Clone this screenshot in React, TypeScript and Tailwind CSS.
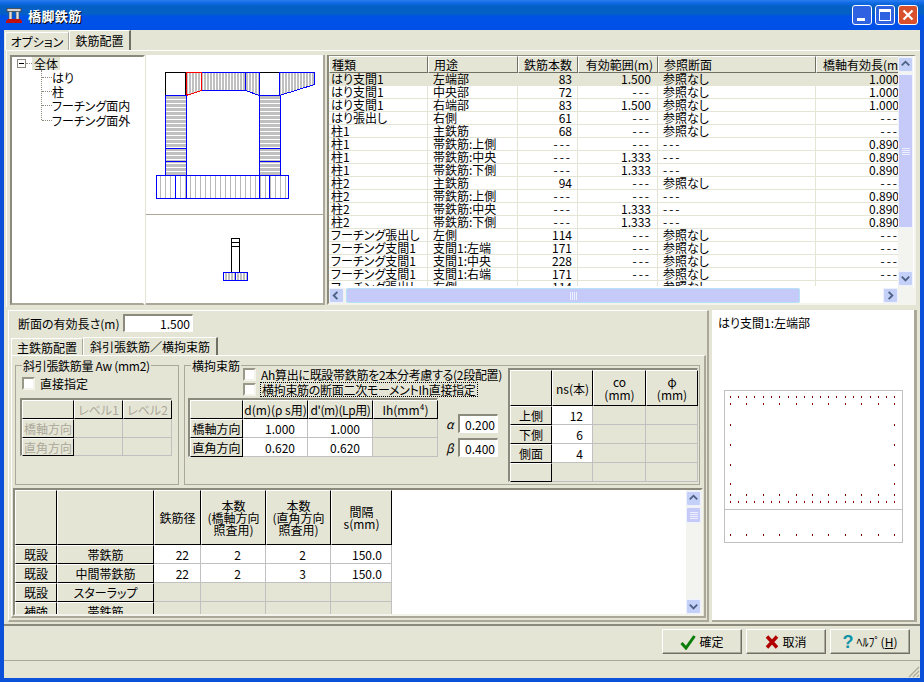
import React from "react";

const DARK = "border-[#aca899]";
const HEAD = "bg-[#e5e5d6] border-t border-l border-t-white border-l-white border-r border-b border-r-black border-b-black flex items-center justify-center text-center";
const DATA = "bg-white border-r border-b border-[#c0c0c0] flex items-center justify-end";
const GRAY = "bg-[#e5e5d6] border-r border-b border-[#c0c0c0]";
const SUNK = "border-t-2 border-l-2 border-t-[#8c8a7c] border-l-[#8c8a7c] border-r border-b border-r-white border-b-white";

function H({ children, off }: { children?: React.ReactNode; off?: boolean }) {
  return <div className={HEAD + (off ? " text-[#aca899]" : "")}>{children}</div>;
}
function D({ children, pr = "pr-[8px]" }: { children?: React.ReactNode; pr?: string }) {
  return <div className={DATA + " " + pr}>{children}</div>;
}
function X() {
  return <div className={GRAY} />;
}

function Check() {
  return <span className="block w-[13px] h-[13px] shrink-0 bg-white border-2 border-t-[#9a9888] border-l-[#9a9888] border-r-[#f4f4ec] border-b-[#f4f4ec]" />;
}

function Arrow({ dir }: { dir: "up" | "down" | "left" | "right" }) {
  const p = {
    up: "M3 8 L7 4 L11 8",
    down: "M3 5 L7 9 L11 5",
    left: "M8 3 L4 7 L8 11",
    right: "M5 3 L9 7 L5 11",
  }[dir];
  return (
    <span className="block w-[15px] h-[15px] shrink-0 rounded-[2px] bg-[#c4d0f8] border border-[#eef2ff] flex items-center justify-center">
      <svg width="13" height="13" viewBox="0 0 14 14">
        <path d={p} fill="none" stroke="#4d6185" strokeWidth="2" />
      </svg>
    </span>
  );
}

function Grip({ vertical }: { vertical?: boolean }) {
  return (
    <svg width="8" height="8" viewBox="0 0 8 8" className="shrink-0">
      {[1, 3, 5, 7].map((v) =>
        vertical ? (
          <rect key={v} x="0" y={v} width="8" height="1" fill="#eef0ff" />
        ) : (
          <rect key={v} x={v} y="0" width="1" height="8" fill="#eef0ff" />
        )
      )}
    </svg>
  );
}

const rows: string[][] = [
  ["はり支間1", "左端部", "83", "1.500", "参照なし", "1.000"],
  ["はり支間1", "中央部", "72", "---", "参照なし", "1.000"],
  ["はり支間1", "右端部", "83", "1.500", "参照なし", "1.000"],
  ["はり張出し", "右側", "61", "---", "参照なし", "---"],
  ["柱1", "主鉄筋", "68", "---", "参照なし", "---"],
  ["柱1", "帯鉄筋:上側", "---", "---", "---", "0.890"],
  ["柱1", "帯鉄筋:中央", "---", "1.333", "---", "0.890"],
  ["柱1", "帯鉄筋:下側", "---", "1.333", "---", "0.890"],
  ["柱2", "主鉄筋", "94", "---", "参照なし", "---"],
  ["柱2", "帯鉄筋:上側", "---", "---", "---", "0.890"],
  ["柱2", "帯鉄筋:中央", "---", "1.333", "---", "0.890"],
  ["柱2", "帯鉄筋:下側", "---", "1.333", "---", "0.890"],
  ["フーチング張出し", "左側", "114", "---", "参照なし", "---"],
  ["フーチング支間1", "支間1:左端", "171", "---", "参照なし", "---"],
  ["フーチング支間1", "支間1:中央", "228", "---", "参照なし", "---"],
  ["フーチング支間1", "支間1:右端", "171", "---", "参照なし", "---"],
  ["フーチング張出し", "右側", "114", "---", "参照なし", "---"],
];

const GH = "bg-[#e5e5d6] border-t border-l border-white border-r border-b border-r-[#716f64] border-b-[#716f64] flex items-center overflow-hidden whitespace-nowrap";
const GC = "border-r border-[#e5e5d6] flex items-center whitespace-nowrap leading-[12px]";

function Dash({ v }: { v: string }) {
  return v === "---" ? <span className="tracking-[2px]">---</span> : <>{v}</>;
}

function DataGrid() {
  return (
    <div className={"ml-[2px] w-[589px] h-[250px] bg-white flex flex-col border-t border-l-2 border-r-2 border-b-2 border-t-[#8c8a7c] border-l-[#8c8a7c] border-r-[#f4f4ec] border-b-[#f4f4ec]"}>
      <div className="flex h-[232px]">
        <div className="w-[569px] overflow-hidden">
          <div className="w-[590px] grid grid-cols-[99px_90px_60px_80px_158px_103px] h-[17px]">
            <div className={GH + " pl-[2px]"}>種類</div>
            <div className={GH + " pl-[5px]"}>用途</div>
            <div className={GH + " justify-center"}>鉄筋本数</div>
            <div className={GH + " justify-end pr-[4px]"}>有効範囲(m)</div>
            <div className={GH + " pl-[5px]"}>参照断面</div>
            <div className={GH + " pl-[6px]"}>橋軸有効長(m)</div>
          </div>
          <div className="h-[213px] overflow-hidden">
            {rows.map((r, i) => (
              <div
                key={i}
                className={"w-[590px] grid grid-cols-[99px_90px_60px_80px_158px_103px] h-[13px] border-b border-[#e5e5d6] " + (i === 0 ? "bg-[#e5e5d6]" : "")}
              >
                <div className={GC + " pl-[2px]"}>{r[0]}</div>
                <div className={GC + " pl-[5px]"}>{r[1]}</div>
                <div className={GC + " justify-end pr-[5px]"}><Dash v={r[2]} /></div>
                <div className={GC + " justify-end pr-[6px]"}><Dash v={r[3]} /></div>
                <div className={GC + " pl-[5px]"}><Dash v={r[4]} /></div>
                <div className={GC + " justify-end pr-[19px]"}><Dash v={r[5]} /></div>
              </div>
            ))}
          </div>
        </div>
        <div className="w-[15px] flex flex-col bg-[#f3f3ef] pt-[1px]">
          <Arrow dir="up" />
          <div className="mt-[2px] h-[154px] rounded-[2px] bg-[#c5caf9] border border-[#eef2ff] flex items-center justify-center">
            <Grip vertical />
          </div>
          <div className="flex-1" />
          <Arrow dir="down" />
          <div className="h-[2px]" />
        </div>
      </div>
      <div className="flex h-[15px] bg-[#f3f3ef]">
        <Arrow dir="left" />
        <div className="ml-[2px] w-[454px] rounded-[2px] bg-[#c5caf9] border border-[#b5e2f7] flex items-center justify-center">
          <Grip />
        </div>
        <div className="flex-1 bg-white" />
        <Arrow dir="right" />
        <div className="w-[16px]" />
      </div>
    </div>
  );
}

function Diagram() {
  const blue = "#0000ff";
  return (
    <svg width="177" height="250" viewBox="146 55 177 250" shapeRendering="crispEdges" className="block">
      <defs>
        <pattern id="hv" width="3" height="10" patternUnits="userSpaceOnUse">
          <rect width="2" height="10" fill="#c0c0c0" />
        </pattern>
        <pattern id="hh" width="10" height="4" patternUnits="userSpaceOnUse">
          <rect width="10" height="3" fill="#c0c0c0" />
        </pattern>
        <pattern id="hf" width="5" height="10" patternUnits="userSpaceOnUse">
          <rect width="1" height="10" fill="#b8b8b8" />
        </pattern>
      </defs>
      <rect x="165.5" y="72.5" width="20" height="23" fill="none" stroke="#000" />
      <rect x="259.5" y="72.5" width="20" height="23" fill="none" stroke="#000" />
      <polygon points="201.5,72.5 245.5,72.5 245.5,90.5 201.5,90.5" fill="url(#hv)" stroke={blue} />
      <polygon points="245.5,72.5 259.5,72.5 259.5,95.5 245.5,90.5" fill="url(#hv)" stroke={blue} />
      <polygon points="279.5,72.5 314.5,72.5 314.5,84.5 279.5,95.5" fill="url(#hv)" stroke={blue} />
      <polygon points="186,72.5 201.5,72.5 201.5,90.5 186,95.5" fill="url(#hv)" stroke="#ff0000" />
      {[165.5, 259.5].map((x) => (
        <g key={x}>
          <rect x={x} y="95.5" width="20.5" height="53" fill="url(#hh)" stroke={blue} />
          <rect x={x} y="148.5" width="20.5" height="13" fill="url(#hh)" stroke={blue} />
          <rect x={x} y="161.5" width="20.5" height="14" fill="url(#hh)" stroke={blue} />
        </g>
      ))}
      <rect x="156.5" y="175.5" width="132" height="23" fill="url(#hf)" stroke={blue} />
      {[175.5, 186, 259.5, 269.5].map((x) => (
        <line key={x} x1={x} y1="175.5" x2={x} y2="198.5" stroke={blue} />
      ))}
      <line x1="146" y1="214.5" x2="323" y2="214.5" stroke="#aca899" />
      <rect x="231.5" y="238.5" width="8" height="34" fill="none" stroke="#000" />
      <line x1="231.5" y1="242.5" x2="239.5" y2="242.5" stroke="#000" />
      <line x1="231.5" y1="246.5" x2="239.5" y2="246.5" stroke="#000" />
      <rect x="223.5" y="272.5" width="24" height="8" fill="url(#hv)" stroke={blue} />
      <line x1="235.5" y1="272.5" x2="235.5" y2="280.5" stroke={blue} />
    </svg>
  );
}

function Tree() {
  const items = ["はり", "柱", "フーチング面内", "フーチング面外"];
  return (
    <div className="w-[135px] h-[250px] bg-white border-2 border-t-[#8c8a7c] border-l-[#8c8a7c] border-r-white border-b-[#aca899] pl-[5px]">
      <div className="flex items-center h-[13px]">
        <span className="w-[9px] h-[9px] border border-[#8c8a7c] flex items-center justify-center shrink-0">
          <span className="block w-[5px] h-px bg-black" />
        </span>
        <span className="w-[6px] border-t border-dotted border-[#8c8a7c]" />
        <span className="bg-[#e5e5d6] px-[2px] leading-[13px]">全体</span>
      </div>
      <div className="ml-[24px] h-[50px] border-l border-dotted border-[#8c8a7c]">
        {items.map((t) => (
          <div key={t} className="flex items-center h-[14.3px] whitespace-nowrap">
            <span className="w-[10px] border-t border-dotted border-[#8c8a7c] shrink-0" />
            <span>{t}</span>
          </div>
        ))}
      </div>
    </div>
  );
}

function SectionChart() {
  const all = [64, 88, 112, 136, 163, 187, 211, 238, 262, 286, 310, 334, 358, 382, 409, 433, 457, 484, 508, 532, 556];
  const few = [64, 112, 163, 211, 262, 310, 358, 409, 457, 508, 556];
  const dots: [number, number][] = [];
  const X0 = (v: number) => Math.round(710 + v / 3);
  all.forEach((v) => {
    dots.push([X0(v), 396], [X0(v), 501]);
  });
  few.forEach((v) => {
    dots.push([X0(v), 403], [X0(v), 494], [X0(v), 534]);
  });
  [424, 444, 464, 483].forEach((y) => {
    dots.push([X0(64), y], [X0(556), y]);
  });
  return (
    <svg width="179" height="153" viewBox="725 390 179 153" shapeRendering="crispEdges" className="block mt-[60px] ml-[12px]">
      <rect x="725.5" y="390.5" width="178" height="152" fill="#fff" stroke="#c0c0c0" />
      <line x1="725" y1="509.5" x2="903" y2="509.5" stroke="#c0c0c0" />
      {dots.map(([x, y], i) => (
        <rect key={i} x={x} y={y} width="1" height="2" fill="#800000" />
      ))}
    </svg>
  );
}

function Legend({ children }: { children: React.ReactNode }) {
  return <span className="absolute left-[6px] top-[-7px] bg-[#e5e5d6] px-[1px] leading-[13px] whitespace-nowrap">{children}</span>;
}

function FootBtn({ icon, children }: { icon: React.ReactNode; children: React.ReactNode }) {
  return (
    <div className="w-[80px] h-[25px] bg-[#e5e5d6] border border-t-white border-l-white border-r-[#716f64] border-b-[#716f64] flex items-center justify-center gap-[3px] shadow-[inset_-1px_-1px_0_#aca899]">
      {icon}
      <span>{children}</span>
    </div>
  );
}

export default function App() {
  return (
    <div className="w-[924px] h-[682px] overflow-hidden flex flex-col bg-[#0a50d8] text-[12px] leading-[13px] text-black font-['Noto_Sans_CJK_JP','Noto_Sans',sans-serif] [font-feature-settings:'palt']">
      {/* title bar */}
      <div className="h-[30px] shrink-0 flex items-center pl-[6px] pr-[6px] bg-[linear-gradient(180deg,#2a7df0_0px,#0f6ae6_3px,#0560c6_6px,#0560c6_14px,#0052e6_16px,#0050e8_100%)]">
        <svg width="16" height="16" viewBox="0 0 16 16" className="shrink-0">
          <rect x="1" y="1.5" width="14" height="3" fill="#d4d4d4" stroke="#444" strokeWidth="0.8" />
          <rect x="3" y="4.5" width="3" height="8" fill="#e0e0e0" stroke="#555" strokeWidth="0.7" />
          <rect x="10" y="4.5" width="3" height="8" fill="#e0e0e0" stroke="#555" strokeWidth="0.7" />
          <polygon points="2,12 14,12 16,14 16,16 0,16 0,14" fill="#c01010" />
        </svg>
        <span className="ml-[6px] text-white font-bold text-[13px] tracking-[0.4px] [text-shadow:1px_1px_0_#000]">橋脚鉄筋</span>
        <div className="ml-auto flex gap-[3px]">
          <div className="w-[20px] h-[20px] rounded-[3px] border border-white bg-[#2f62e0] flex items-end pl-[4px] pb-[3px]">
            <span className="block w-[8px] h-[3px] bg-white" />
          </div>
          <div className="w-[20px] h-[20px] rounded-[3px] border border-white bg-[#2f62e0] flex items-center justify-center">
            <span className="block w-[12px] h-[12px] border border-white border-t-[3px]" />
          </div>
          <div className="w-[20px] h-[20px] rounded-[3px] border border-white bg-[#d8502c] flex items-center justify-center">
            <svg width="12" height="12" viewBox="0 0 12 12">
              <path d="M1.5 1.5 L10.5 10.5 M10.5 1.5 L1.5 10.5" stroke="#fff" strokeWidth="2.2" />
            </svg>
          </div>
        </div>
      </div>

      {/* client */}
      <div className="mx-[4px] h-[648px] bg-[#e5e5d6] flex flex-col">
        <div className="h-[20px] flex items-end pl-[1px]">
          <div className="h-[18px] w-[64px] border-t border-l border-white flex items-center justify-center rounded-tl-[2px] border-r border-r-[#aca899]">オプション</div>
          <div className="h-[20px] w-[62px] border-t border-l border-white border-r-2 border-r-[#716f64] flex items-center justify-center rounded-tl-[2px]">鉄筋配置</div>
        </div>

        <div className="ml-[2px] h-[257px] border-t border-l border-white pt-[4px] pl-[3px] flex">
          <Tree />
          <div className="ml-[1px] w-[179px] h-[250px] bg-white border-r-2 border-b-2 border-[#aca899]">
            <Diagram />
          </div>
          <DataGrid />
        </div>

        <div className="h-[317px] flex items-start pl-[4px] pt-[3px]">
          {/* left panel */}
          <div className="w-[701px] h-[312px] border-t border-l border-white border-r-2 border-b-2 border-r-[#aca899] border-b-[#aca899] pl-[2px] pt-[3px]">
            <div className="h-[18px] flex items-center">
              <span className="ml-[7px] w-[105px] whitespace-nowrap">断面の有効長さ(m)</span>
              <span className={"w-[70px] h-[18px] bg-white flex items-center justify-end pr-[2px] " + SUNK}>1.500</span>
            </div>
            <div className="mt-[5px] h-[18px] flex items-end">
              <div className="h-[17px] w-[72px] border-t border-l border-white border-r border-r-[#aca899] flex items-center justify-center">主鉄筋配置</div>
              <div className="h-[18px] w-[135px] border-t border-l border-white border-r-2 border-r-[#716f64] flex items-center justify-center whitespace-nowrap">斜引張鉄筋／横拘束筋</div>
            </div>
            <div className="w-[695px] h-[263px] border-t border-l border-white border-r-2 border-b-2 border-r-[#aca899] border-b-[#aca899] pl-[1px] pt-[9px]">
              <div className="h-[120px] flex pl-[2px] gap-[5px]">
                {/* group 1 */}
                <div className={"relative w-[164px] h-[120px] border " + DARK + " pl-[4px] pt-[11px]"}>
                  <Legend><span className="tracking-[-0.3px]">斜引張鉄筋量 Aw (mm2)</span></Legend>
                  <div className="flex items-center gap-[5px] ml-[2px]">
                    <Check />
                    <span>直接指定</span>
                  </div>
                  <div className={"mt-[8px] w-[152px] h-[58px] grid grid-cols-[52px_49px_49px] grid-rows-[19px_19px_18px] " + SUNK}>
                    <H />
                    <H off>レベル1</H>
                    <H off>レベル2</H>
                    <H off>橋軸方向</H>
                    <X />
                    <X />
                    <H off>直角方向</H>
                    <X />
                    <X />
                  </div>
                </div>
                {/* group 2 */}
                <div className={"relative w-[516px] h-[120px] border " + DARK + " pl-[3px] flex"}>
                  <Legend>横拘束筋</Legend>
                  <div className="w-[252px] pt-[1px]">
                    <div className="flex items-center gap-[4px] ml-[55px] h-[15px] whitespace-nowrap tracking-[-0.3px]">
                      <Check />
                      <span className="ml-[1px]">Ah算出に既設帯鉄筋を2本分考慮する(2段配置)</span>
                    </div>
                    <div className="flex items-center gap-[4px] ml-[55px] h-[15px] whitespace-nowrap tracking-[-0.3px]">
                      <Check />
                      <span className="border border-dotted border-black px-px">横拘束筋の断面二次モーメントIh直接指定</span>
                    </div>
                    <div className={"mt-[1px] w-[250px] h-[59px] grid grid-cols-[53px_65px_65px_65px] grid-rows-[19px_19px_19px] " + SUNK}>
                      <H />
                      <H><span className="whitespace-nowrap">d(m)(ρ s用)</span></H>
                      <H><span className="whitespace-nowrap tracking-[-0.4px]">d'(m)(Lp用)</span></H>
                      <H>Ih(mm⁴)</H>
                      <H>橋軸方向</H>
                      <D pr="pr-[12px]">1.000</D>
                      <D pr="pr-[12px]">1.000</D>
                      <X />
                      <H>直角方向</H>
                      <D pr="pr-[12px]">0.620</D>
                      <D pr="pr-[12px]">0.620</D>
                      <X />
                    </div>
                  </div>
                  <div className="w-[58px] pt-[48px] pl-[6px]">
                    <div className="flex items-center h-[19px]">
                      <span className="w-[12px] italic">α</span>
                      <span className={"w-[40px] h-[19px] bg-white flex items-center justify-end pr-[2px] " + SUNK}>0.200</span>
                    </div>
                    <div className="flex items-center h-[19px] mt-[5px]">
                      <span className="w-[12px] italic">β</span>
                      <span className={"w-[40px] h-[19px] bg-white flex items-center justify-end pr-[2px] " + SUNK}>0.400</span>
                    </div>
                  </div>
                  <div className={"ml-[10px] mt-[2px] w-[190px] h-[114px] grid grid-cols-[42px_41px_53px_52px] grid-rows-[36px_19px_19px_19px_19px] " + SUNK}>
                    <H />
                    <H>ns(本)</H>
                    <H><span>co<br />(mm)</span></H>
                    <H><span>φ<br />(mm)</span></H>
                    <H>上側</H>
                    <D pr="pr-[9px]">12</D>
                    <X />
                    <X />
                    <H>下側</H>
                    <D pr="pr-[9px]">6</D>
                    <X />
                    <X />
                    <H>側面</H>
                    <D pr="pr-[9px]">4</D>
                    <X />
                    <X />
                    <H />
                    <X />
                    <X />
                    <X />
                  </div>
                </div>
              </div>
              {/* lower table */}
              <div className="mt-[3px] w-[690px] h-[128px] bg-white border-2 border-t-[#8c8a7c] border-l-[#8c8a7c] border-r-[#f4f4ec] border-b-[#f4f4ec] flex">
                <div className="w-[377px] h-[124px] overflow-hidden">
                  <div className="grid grid-cols-[42px_97px_47px_65px_65px_61px] grid-rows-[55px_19px_19px_19px_19px]">
                    <H />
                    <H />
                    <H>鉄筋径</H>
                    <H><span className="leading-[12px] whitespace-nowrap">本数<br />(橋軸方向<br />照査用)</span></H>
                    <H><span className="leading-[12px] whitespace-nowrap">本数<br />(直角方向<br />照査用)</span></H>
                    <H><span className="leading-[12px]">間隔<br />s(mm)</span></H>
                    <H>既設</H>
                    <H>帯鉄筋</H>
                    <D pr="pr-[11px]">22</D>
                    <D pr="pr-[24px]">2</D>
                    <D pr="pr-[24px]">2</D>
                    <D pr="pr-[9px]">150.0</D>
                    <H>既設</H>
                    <H>中間帯鉄筋</H>
                    <D pr="pr-[11px]">22</D>
                    <D pr="pr-[24px]">2</D>
                    <D pr="pr-[24px]">3</D>
                    <D pr="pr-[9px]">150.0</D>
                    <H>既設</H>
                    <H>スターラップ</H>
                    <X />
                    <X />
                    <X />
                    <X />
                    <H>補強</H>
                    <H>帯鉄筋</H>
                    <X />
                    <X />
                    <X />
                    <X />
                  </div>
                </div>
                <div className="flex-1" />
                <div className="w-[15px] bg-[#f3f3ef] flex flex-col pt-[1px]">
                  <Arrow dir="up" />
                  <div className="mt-[1px] h-[16px] rounded-[2px] bg-[#c5caf9] border border-[#eef2ff] flex items-center justify-center">
                    <Grip vertical />
                  </div>
                  <div className="flex-1" />
                  <Arrow dir="down" />
                </div>
              </div>
            </div>
          </div>
          {/* right panel */}
          <div className="ml-[3px] w-[205px] h-[312px] bg-white border-r-[3px] border-b-2 border-[#aca899]">
            <div className="pl-[6px] pt-[6px] h-[20px] whitespace-nowrap">はり支間1:左端部</div>
            <SectionChart />
          </div>
        </div>

        {/* footer */}
        <div className="h-[54px] border-t-2 border-[#8c8a7c]">
          <div className="h-[35px] flex items-start justify-end gap-[4px] pr-[10px] pt-[3px] border-b border-[#aca899]">
            <FootBtn
              icon={
                <svg width="16" height="16" viewBox="0 0 16 16">
                  <path d="M1.5 9 L6 14 L14.5 2" fill="none" stroke="#0a7d0a" strokeWidth="3" />
                </svg>
              }
            >
              確定
            </FootBtn>
            <FootBtn
              icon={
                <svg width="14" height="14" viewBox="0 0 14 14">
                  <path d="M2 1.5 L12 12.5 M12 1.5 L2 12.5" stroke="#b00000" strokeWidth="3.4" />
                </svg>
              }
            >
              取消
            </FootBtn>
            <FootBtn
              icon={<span className="text-[#0f93a6] font-bold text-[18px] leading-[18px] font-['Liberation_Sans',sans-serif]">?</span>}
            >
              <span className="whitespace-nowrap">ﾍﾙﾌﾟ(<u>H</u>)</span>
            </FootBtn>
          </div>
          <div className="h-[17px] flex items-end justify-end">
            <svg width="12" height="12" viewBox="0 0 12 12">
              <path d="M11 1 L1 11 M11 5 L5 11 M11 9 L9 11" stroke="#aca899" strokeWidth="1.2" />
            </svg>
          </div>
        </div>
      </div>
    </div>
  );
}
